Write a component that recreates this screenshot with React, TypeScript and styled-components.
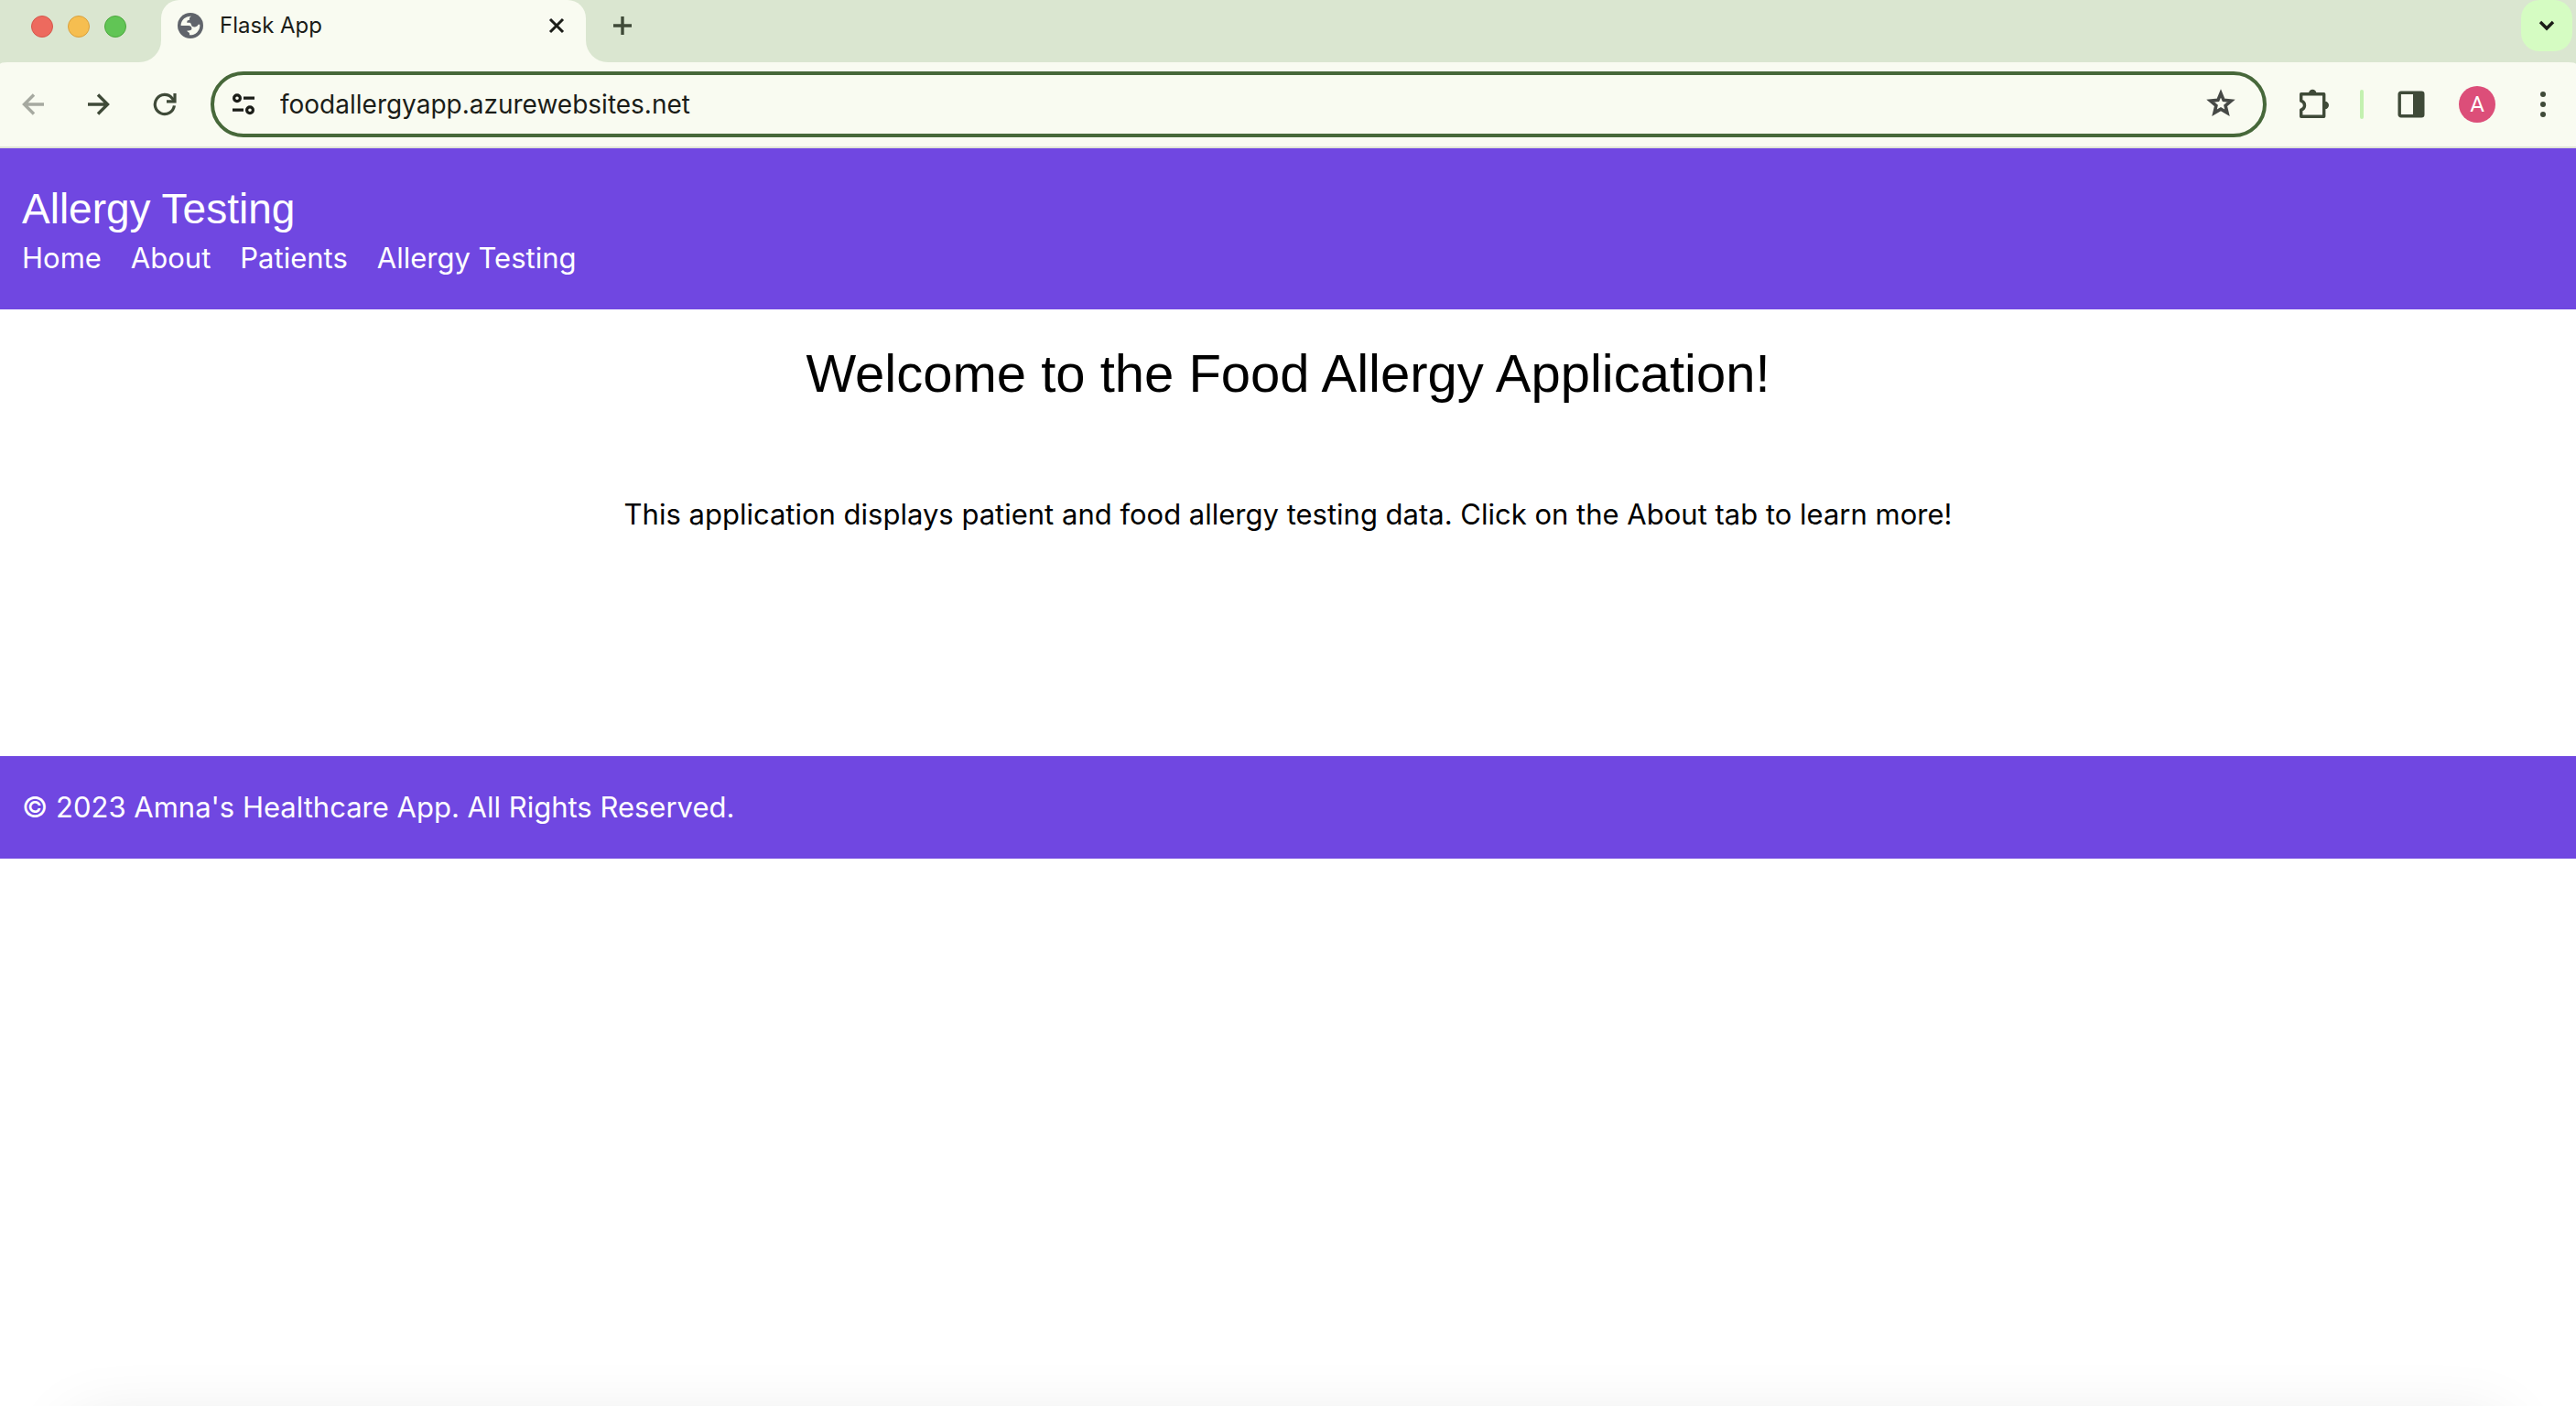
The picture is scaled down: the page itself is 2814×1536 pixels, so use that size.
import React from 'react';
import styled, { createGlobalStyle } from 'styled-components';

const color = {
  strip: '#dae6d0',
  chrome: '#f9fbf1',
  chromeBorder: '#e0e3d8',
  icon: '#3f4a38',
  iconDisabled: '#a6a9a0',
  ink: '#1b1d18',
  focusRing: '#47683a',
  brand: '#7047e1',
};

const displayFont = '"Liberation Sans", Arial, sans-serif';

const GlobalStyle = createGlobalStyle`
  *, *::before, *::after { box-sizing: border-box; }
  body {
    margin: 0;
    background: #fff;
    color: #000;
    font-family: Inter, "Liberation Sans", sans-serif;
  }
`;

const Window = styled.div`
  display: flex;
  flex-direction: column;
  min-height: 100vh;
`;

/* ---------- browser chrome ---------- */

const TabStrip = styled.div`
  display: flex;
  height: 68px;
  background: ${color.chrome};
`;

const WindowControls = styled.div`
  display: flex;
  gap: 16px;
  width: 176px;
  padding: 17px 0 0 34px;
  background: ${color.strip};
  border-bottom-right-radius: 24px;
`;

const Light = styled.button<{ $fill: string; $edge: string }>`
  width: 24px;
  height: 24px;
  padding: 0;
  border: 1px solid ${(p) => p.$edge};
  border-radius: 50%;
  background: ${(p) => p.$fill};
`;

const TabCell = styled.div`
  width: 464px;
  height: 34px;
  background: ${color.strip};
`;

const Tab = styled.div`
  display: flex;
  align-items: center;
  height: 56px;
  padding: 0 18px;
  border-radius: 20px 20px 0 0;
  background: ${color.chrome};
`;

const TabTitle = styled.span`
  flex: 1;
  margin-left: 18px;
  color: ${color.ink};
  font-size: 24px;
  line-height: 32px;
`;

const IconButton = styled.button<{ $tone?: string }>`
  display: flex;
  align-items: center;
  justify-content: center;
  width: 28px;
  height: 28px;
  padding: 0;
  border: 0;
  background: none;
  color: ${(p) => p.$tone ?? color.icon};
`;

const StripRest = styled.div`
  display: flex;
  flex: 1;
  justify-content: space-between;
  padding: 0 4px 0 12px;
  border-bottom-left-radius: 24px;
  background: ${color.strip};
`;

const StripButton = styled(IconButton)`
  width: 56px;
  height: 56px;
`;

const TabSearchButton = styled(StripButton)`
  border-radius: 20px;
  background: #d5fcc2;
`;

const ToolbarBack = styled.div`
  background: ${color.strip};
`;

const Toolbar = styled.div`
  display: flex;
  align-items: center;
  height: 94px;
  border-bottom: 2px solid ${color.chromeBorder};
  border-radius: 8px 8px 0 0 / 2px 2px 0 0;
  background: ${color.chrome};
`;

const ToolButton = styled(IconButton)`
  width: 72px;
  height: 72px;
`;

const AddressBar = styled.form`
  display: flex;
  flex: 1;
  align-items: center;
  height: 72px;
  margin: 0 16px 0 14px;
  padding: 0 28px 0 18px;
  border: 4px solid ${color.focusRing};
  border-radius: 36px;
`;

const AddressInput = styled.input`
  flex: 1;
  min-width: 0;
  margin: 0 24px 0 26px;
  padding: 0;
  border: 0;
  outline: 0;
  background: none;
  color: ${color.ink};
  font-family: inherit;
  font-size: 28px;
  line-height: 40px;
`;

const StarButton = styled(IconButton)`
  width: 36px;
  height: 36px;
`;

const Divider = styled.div`
  width: 4px;
  height: 32px;
  margin: 0 16px 0 14px;
  border-radius: 2px;
  background: #c3f1b0;
`;

const Avatar = styled.span`
  width: 40px;
  height: 40px;
  border-radius: 50%;
  background: #dc4e79;
  color: #fff;
  font-family: Roboto, sans-serif;
  font-size: 24px;
  line-height: 40px;
  text-align: center;
`;

/* ---------- page ---------- */

const Header = styled.header`
  padding: 36px 24px 32px;
  background: ${color.brand};
  color: #fff;
`;

const Brand = styled.div`
  font-family: ${displayFont};
  font-size: 46px;
  line-height: 60px;
`;

const Nav = styled.nav`
  display: flex;
  gap: 32px;
`;

const NavLink = styled.a`
  color: #fff;
  font-size: 31px;
  line-height: 48px;
  text-decoration: none;
`;

const Main = styled.main`
  min-height: 488px;
  padding: 34px 24px;
  text-align: center;
`;

const Heading = styled.h1`
  margin: 0 0 94px;
  font-family: ${displayFont};
  font-size: 58px;
  font-weight: 400;
  line-height: 72px;
`;

const BodyText = styled.p`
  margin: 0;
  font-size: 31px;
  line-height: 48px;
`;

const Footer = styled.footer`
  padding: 32px 24px;
  background: ${color.brand};
  color: #fff;
`;

const BottomShade = styled.div`
  position: fixed;
  right: 80px;
  bottom: -120px;
  left: 80px;
  height: 100px;
  box-shadow: 0 0 76px rgba(0, 0, 0, 0.11);
  pointer-events: none;
`;

/* ---------- icons ---------- */

const GlobeIcon = () => (
  <svg width="28" height="28" viewBox="0 0 28 28" aria-hidden="true">
    <circle cx="14" cy="14" r="14" fill="#60646b" />
    <path
      fill={color.chrome}
      d="M3.6 14A10.4 10.4 0 0 1 15 3.7C13 4.6 12.6 6 13.2 7.4L10.4 8.8V11C13.4 10.6 14.5 11 14.8 12.5C15.2 14.6 16.5 15.6 19 15.4C21 15.2 22 14 22.6 12.8L24.3 12.8A10.4 10.4 0 0 1 13 24.3V22.4C12.6 21 10.4 21.2 10.4 19.6C13 19.4 15.6 19.4 15.4 17C15.2 14.8 14 14 12 14Z"
    />
  </svg>
);

const CloseIcon = () => (
  <svg width="18" height="18" viewBox="0 0 18 18" fill="none" stroke="currentColor" strokeWidth="3" aria-hidden="true">
    <path d="M2 2l14 14M16 2L2 16" />
  </svg>
);

const PlusIcon = () => (
  <svg width="20" height="20" viewBox="0 0 20 20" fill="none" stroke="currentColor" strokeWidth="3.4" aria-hidden="true">
    <path d="M10 0v20M0 10h20" />
  </svg>
);

const ChevronIcon = () => (
  <svg width="18" height="12" viewBox="0 0 18 12" fill="none" stroke="currentColor" strokeWidth="3.4" aria-hidden="true">
    <path d="M2 2l7 7 7-7" />
  </svg>
);

const BackIcon = () => (
  <svg width="24" height="24" viewBox="0 0 24 24" fill="none" stroke="currentColor" strokeWidth="3.4" aria-hidden="true">
    <path d="M24 12H3M13 1.5L2.5 12 13 22.5" />
  </svg>
);

const ForwardIcon = () => (
  <svg width="24" height="24" viewBox="0 0 24 24" fill="none" stroke="currentColor" strokeWidth="3.4" aria-hidden="true">
    <path d="M0 12h21M11 1.5L21.5 12 11 22.5" />
  </svg>
);

const ReloadIcon = () => (
  <svg width="26" height="26" viewBox="0 0 26 26" fill="none" stroke="currentColor" strokeWidth="3.2" aria-hidden="true">
    <path d="M23.4 14.4A10.6 10.6 0 1 1 21 6.2L23 8.6" />
    <path d="M24 1v8.8H15" />
  </svg>
);

const TuneIcon = () => (
  <svg width="24" height="24" viewBox="0 0 24 24" fill="none" stroke="currentColor" strokeWidth="3.2" aria-hidden="true">
    <circle cx="5" cy="5.2" r="3.4" />
    <circle cx="19" cy="18.2" r="3.4" />
    <path d="M12 5.2h12M0 18.2h12" />
  </svg>
);

const StarIcon = () => (
  <svg width="34" height="34" viewBox="0 0 34 34" fill="none" stroke="#464946" strokeWidth="3.6" aria-hidden="true">
    <path d="M17 5l3.1 7.4 8.2.7-6.2 5.3 1.9 7.9L17 22.1l-7 4.2 1.9-7.9-6.2-5.3 8.2-.7z" />
  </svg>
);

const ExtensionIcon = () => (
  <svg width="36" height="36" viewBox="0 0 36 36" aria-hidden="true">
    <path
      fill="none"
      stroke="currentColor"
      strokeWidth="3.4"
      strokeLinejoin="round"
      d="M3.7 6.7H28.7V31.3H3.7V24.2C8.8 22.4 8.8 16 3.7 14.2Z"
    />
    <path fill="currentColor" d="M12 6a4.2 4.2 0 0 1 8.4 0zM29.8 14.8a4.2 4.2 0 0 1 0 8.4z" />
  </svg>
);

const SidePanelIcon = () => (
  <svg width="30" height="30" viewBox="0 0 30 30" aria-hidden="true">
    <rect x="2.2" y="2.2" width="25.6" height="25.6" rx="1.6" fill="none" stroke="currentColor" strokeWidth="3.4" />
    <path fill="currentColor" d="M17 2h11v26H17z" />
  </svg>
);

const MenuIcon = () => (
  <svg width="6" height="28" viewBox="0 0 6 28" fill="currentColor" aria-hidden="true">
    <circle cx="3" cy="3" r="3" />
    <circle cx="3" cy="14" r="3" />
    <circle cx="3" cy="25" r="3" />
  </svg>
);

const links = ['Home', 'About', 'Patients', 'Allergy Testing'];

export default function App() {
  return (
    <Window>
      <GlobalStyle />
      <TabStrip>
        <WindowControls>
          <Light $fill="#ed6a5e" $edge="#d5564b" aria-label="Close window" />
          <Light $fill="#f6be50" $edge="#d9a03d" aria-label="Minimize window" />
          <Light $fill="#61c555" $edge="#4ca73d" aria-label="Zoom window" />
        </WindowControls>
        <TabCell>
          <Tab>
            <GlobeIcon />
            <TabTitle>Flask App</TabTitle>
            <IconButton $tone={color.ink} aria-label="Close tab">
              <CloseIcon />
            </IconButton>
          </Tab>
        </TabCell>
        <StripRest>
          <StripButton aria-label="New tab">
            <PlusIcon />
          </StripButton>
          <TabSearchButton $tone={color.ink} aria-label="Search tabs">
            <ChevronIcon />
          </TabSearchButton>
        </StripRest>
      </TabStrip>

      <ToolbarBack>
        <Toolbar>
          <ToolButton $tone={color.iconDisabled} aria-label="Back">
            <BackIcon />
          </ToolButton>
          <ToolButton aria-label="Forward">
            <ForwardIcon />
          </ToolButton>
          <ToolButton aria-label="Reload">
            <ReloadIcon />
          </ToolButton>
          <AddressBar onSubmit={(e) => e.preventDefault()}>
            <IconButton type="button" $tone={color.ink} aria-label="Site information">
              <TuneIcon />
            </IconButton>
            <AddressInput aria-label="Address" defaultValue="foodallergyapp.azurewebsites.net" spellCheck={false} />
            <StarButton type="button" aria-label="Bookmark this page">
              <StarIcon />
            </StarButton>
          </AddressBar>
          <ToolButton aria-label="Extensions">
            <ExtensionIcon />
          </ToolButton>
          <Divider />
          <ToolButton aria-label="Side panel">
            <SidePanelIcon />
          </ToolButton>
          <ToolButton aria-label="Profile">
            <Avatar>A</Avatar>
          </ToolButton>
          <ToolButton aria-label="Menu">
            <MenuIcon />
          </ToolButton>
        </Toolbar>
      </ToolbarBack>

      <Header>
        <Brand>Allergy Testing</Brand>
        <Nav>
          {links.map((label) => (
            <NavLink key={label} href="#">
              {label}
            </NavLink>
          ))}
        </Nav>
      </Header>

      <Main>
        <Heading>Welcome to the Food Allergy Application!</Heading>
        <BodyText>
          This application displays patient and food allergy testing data. Click on the About tab to learn more!
        </BodyText>
      </Main>

      <Footer>
        <BodyText>© 2023 Amna's Healthcare App. All Rights Reserved.</BodyText>
      </Footer>
      <BottomShade />
    </Window>
  );
}
